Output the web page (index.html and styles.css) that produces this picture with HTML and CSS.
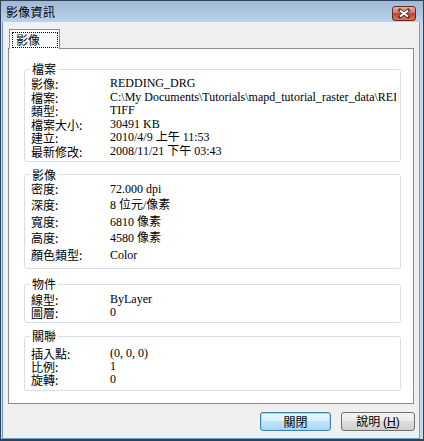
FILE: index.html
```html
<!DOCTYPE html>
<html>
<head>
  <meta charset="UTF-8">
  <title>影像資訊</title>
  <link rel="stylesheet" href="styles.css">
</head>
<body>
  <div class="window">
    <!-- Title bar -->
    <div class="titlebar">
      <span class="title">影像資訊</span>
      <button class="close" aria-label="關閉">
        <svg width="24" height="15" viewBox="0 0 24 15">
          <defs>
            <linearGradient id="closeGrad" x1="0" y1="0" x2="0" y2="1">
              <stop offset="0" stop-color="#eab0a3"/>
              <stop offset="0.45" stop-color="#d97a66"/>
              <stop offset="0.5" stop-color="#c4432c"/>
              <stop offset="1" stop-color="#dc7a62"/>
            </linearGradient>
          </defs>
          <rect x="0.5" y="0.5" width="23" height="14" rx="2.5" fill="url(#closeGrad)" stroke="#6b2a22"/>
          <path d="M8 4.5 L16 10.5 M16 4.5 L8 10.5" stroke="#4a3a38" stroke-width="3.6" stroke-linecap="square"/>
          <path d="M8 4.5 L16 10.5 M16 4.5 L8 10.5" stroke="#ffffff" stroke-width="2"/>
        </svg>
      </button>
    </div>

    <div class="client">
      <!-- Tabs -->
      <div class="tabs">
        <div class="tab active"><span class="tab-label">影像</span></div>
      </div>

      <div class="tab-panel">
        <fieldset class="group group-file">
          <legend>檔案</legend>
          <div class="row"><span class="label">影像:</span><span class="value">REDDING_DRG</span></div>
          <div class="row"><span class="label">檔案:</span><span class="value">C:\My Documents\Tutorials\mapd_tutorial_raster_data\REDDING_DRG.tif</span></div>
          <div class="row"><span class="label">類型:</span><span class="value">TIFF</span></div>
          <div class="row"><span class="label">檔案大小:</span><span class="value">30491 KB</span></div>
          <div class="row"><span class="label">建立:</span><span class="value">2010/4/9 上午 11:53</span></div>
          <div class="row"><span class="label">最新修改:</span><span class="value">2008/11/21 下午 03:43</span></div>
        </fieldset>

        <fieldset class="group group-image">
          <legend>影像</legend>
          <div class="row"><span class="label">密度:</span><span class="value">72.000 dpi</span></div>
          <div class="row"><span class="label">深度:</span><span class="value">8 位元/像素</span></div>
          <div class="row"><span class="label">寬度:</span><span class="value">6810 像素</span></div>
          <div class="row"><span class="label">高度:</span><span class="value">4580 像素</span></div>
          <div class="row"><span class="label">顏色類型:</span><span class="value">Color</span></div>
        </fieldset>

        <fieldset class="group group-object">
          <legend>物件</legend>
          <div class="row"><span class="label">線型:</span><span class="value">ByLayer</span></div>
          <div class="row"><span class="label">圖層:</span><span class="value">0</span></div>
        </fieldset>

        <fieldset class="group group-link">
          <legend>關聯</legend>
          <div class="row"><span class="label">插入點:</span><span class="value">(0, 0, 0)</span></div>
          <div class="row"><span class="label">比例:</span><span class="value">1</span></div>
          <div class="row"><span class="label">旋轉:</span><span class="value">0</span></div>
        </fieldset>
      </div>

      <!-- Dialog buttons -->
      <div class="actions">
        <button class="btn btn-default">關閉</button>
        <button class="btn btn-help">說明 <span class="mnemonic">(<u>H</u>)</span></button>
      </div>
    </div>
  </div>
</body>
</html>
```

FILE: styles.css
```css
/* Base */
* {
  box-sizing: border-box;
}

body {
  margin: 0;
  font-family: "Noto Sans CJK TC", "Liberation Sans", sans-serif;
  font-size: 12px;
  color: #000;
}

/* Window frame */
.window {
  width: 424px;
  height: 441px;
  border: 1px solid #2f4257;
  border-bottom-width: 2px;
  background-color: #c5d9ee;
  display: flex;
  flex-direction: column;
}

.titlebar {
  height: 21px;
  flex: none;
  display: flex;
  align-items: center;
  justify-content: space-between;
  padding: 0 7px 0 5px;
  background: linear-gradient(#a0b9d5, #b9d1ea);
}

.title {
  font-size: 12px;
  line-height: 14px;
  letter-spacing: 0.3px;
}

.close {
  border: none;
  padding: 0;
  margin-top: 4px;
  background: none;
  width: 24px;
  height: 15px;
  display: block;
}

.close svg {
  display: block;
}

.client {
  flex: 1;
  margin: 0 3px 0 1px;
  background-color: #f0f0f0;
  border: 1px solid #6a9fcf;
  border-top: none;
  display: flex;
  flex-direction: column;
}

/* Tabs */
.tabs {
  display: flex;
  margin: 7px 0 0 6px;
  position: relative;
  z-index: 1;
}

.tab {
  width: 51px;
  height: 20px;
  border: 1px solid #898c95;
  border-bottom: none;
  background-color: #fff;
  padding: 2px 1px 0 2px;
}

.tab-label {
  display: block;
  height: 16px;
  border: 1px dotted #000;
  padding: 0 3px;
  line-height: 14px;
}

.tab-panel {
  height: 356px;
  margin: -1px 5px 0 5px;
  border: 1px solid #898c95;
  background-color: #fff;
  padding: 14px 12px 0 15px;
}

/* Group boxes */
.group {
  margin: 0;
  border: 1px solid #d5dfe5;
  border-radius: 3px;
  padding: 2px 4px 2px 6px;
  min-width: 0;
}

.group legend {
  padding: 0 2px;
  margin-left: -1px;
  line-height: 12px;
  font-size: 12px;
}

.row {
  display: flex;
  white-space: nowrap;
}

.label {
  width: 79px;
  flex: none;
}

.value {
  flex: 1;
  overflow: hidden;
  font-family: "Liberation Serif", "Noto Sans CJK TC", serif;
}

.group-file .row {
  line-height: 13.6px;
  height: 13.6px;
}

.group-image {
  margin-top: 7px;
  padding-top: 0;
  padding-bottom: 5px;
}

.group-image .row {
  line-height: 16.5px;
  height: 16.5px;
}

.group-object {
  margin-top: 9px;
  padding-top: 3px;
  padding-bottom: 3px;
}

.group-object .row {
  line-height: 13px;
  height: 13px;
}

.group-link {
  margin-top: 7px;
  padding-top: 4.5px;
  padding-bottom: 3px;
}

.group-link .row {
  line-height: 13.4px;
  height: 13.4px;
}

/* Buttons */
.actions {
  display: flex;
  justify-content: flex-end;
  gap: 10px;
  margin-top: 8px;
  padding-right: 4px;
}

.btn {
  height: 19px;
  width: 71px;
  padding: 0;
  border: 1px solid #707070;
  border-radius: 3px;
  background: linear-gradient(#f2f2f2 0%, #ebebeb 50%, #dddddd 50%, #cfcfcf 100%);
  font-family: "Noto Sans CJK TC", "Liberation Sans", sans-serif;
  font-size: 12px;
  line-height: 16px;
  color: #000;
}

.btn-default {
  border-color: #3c7fb1;
  box-shadow: inset 0 0 0 1px #9fdaf6;
  background: linear-gradient(#eaf6fd 0%, #d9f0fc 50%, #bee6fd 50%, #a7d9f5 100%);
}

.btn-help {
  width: 74px;
}

.mnemonic {
  font-family: "Liberation Sans", sans-serif;
}
```
